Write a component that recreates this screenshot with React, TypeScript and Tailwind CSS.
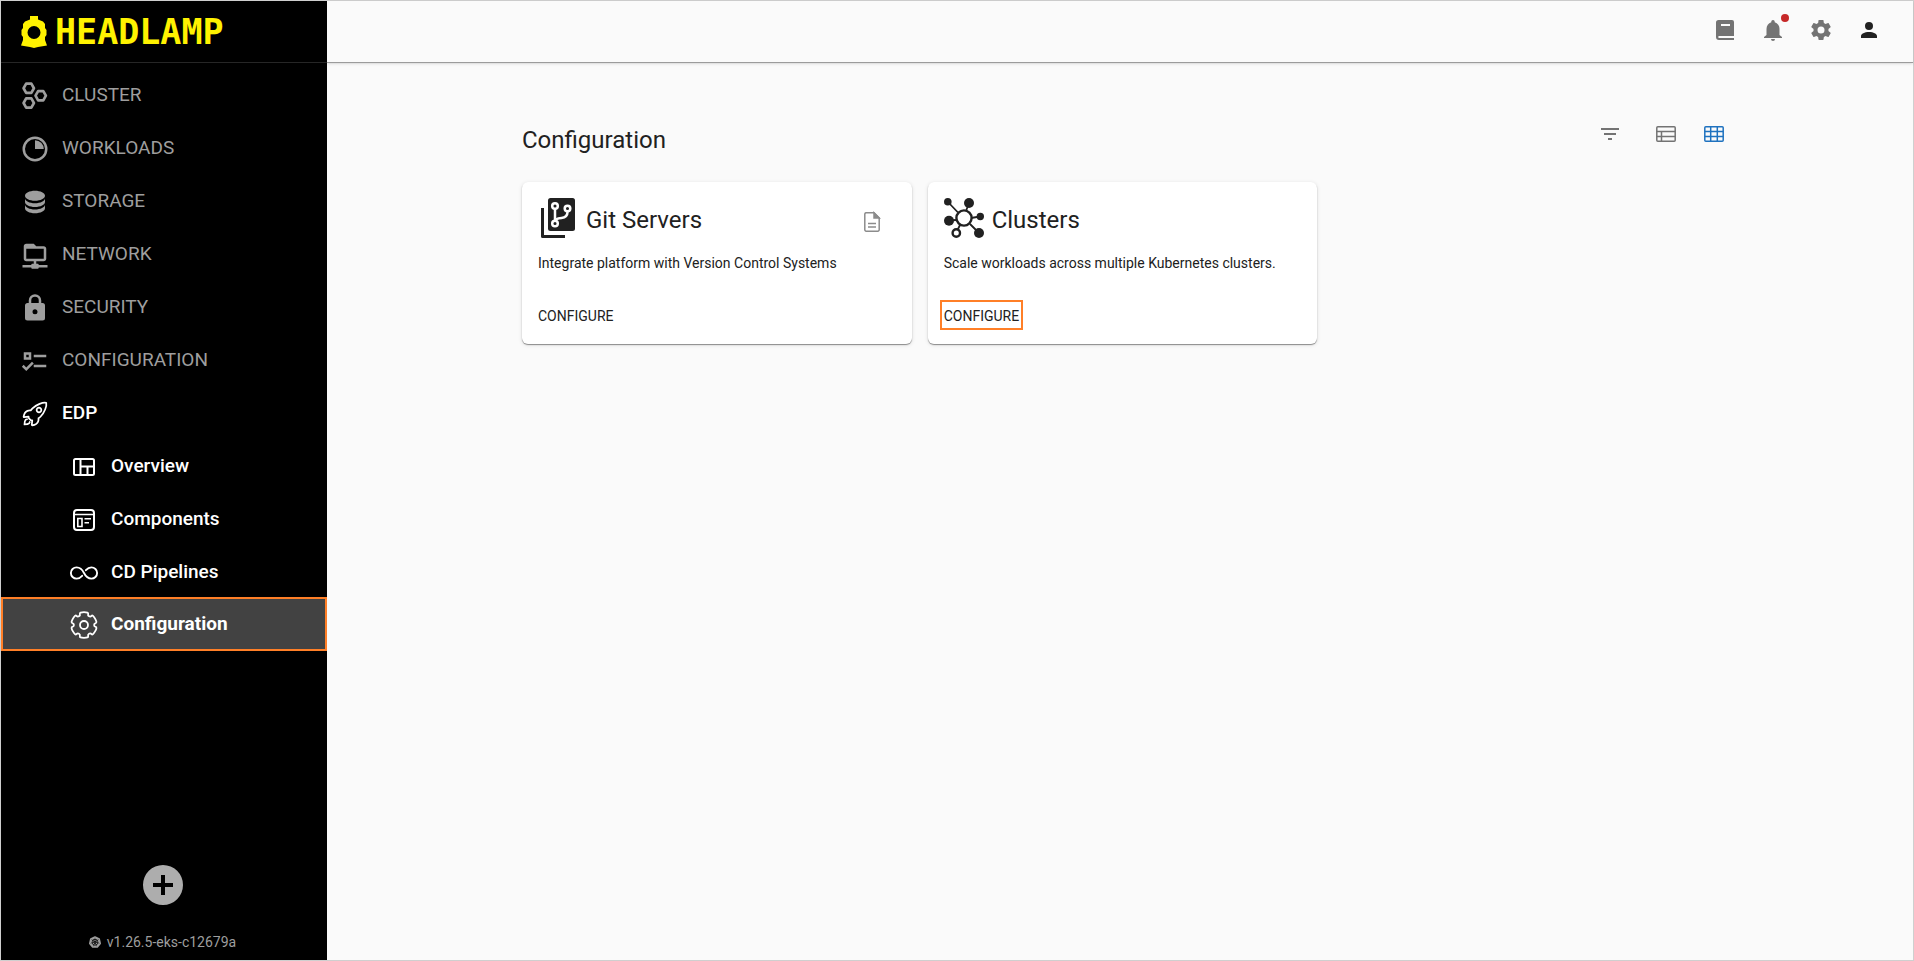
import React from "react";
import { IoInfiniteOutline, IoRocketOutline } from "react-icons/io5";
import { SiKubernetes } from "react-icons/si";

function Glyph({ d, className }: { d: string; className: string }) {
  return (
    <svg viewBox="0 0 24 24" fill="currentColor" aria-hidden="true" className={className}>
      <path fillRule="evenodd" d={d} />
    </svg>
  );
}

const paths = {
  database:
    "M12,3C7.58,3 4,4.79 4,7C4,9.21 7.58,11 12,11C16.42,11 20,9.21 20,7C20,4.79 16.42,3 12,3M4,9V12C4,14.21 7.58,16 12,16C16.42,16 20,14.21 20,12V9C20,11.21 16.42,13 12,13C7.58,13 4,11.21 4,9M4,14V17C4,19.21 7.58,21 12,21C16.42,21 20,19.21 20,17V14C20,16.21 16.42,18 12,18C7.58,18 4,16.21 4,14Z",
  network:
    "M15 20C15 19.45 14.55 19 14 19H13V17H19C20.11 17 21 16.11 21 15V7C21 5.9 20.11 5 19 5H13L11 3H5C3.9 3 3 3.9 3 5V15C3 16.11 3.9 17 5 17H11V19H10C9.45 19 9 19.45 9 20H2V22H9C9 22.55 9.45 23 10 23H14C14.55 23 15 22.55 15 22H22V20H15M5 15V7H19V15H5Z",
  lock: "M12,17A2,2 0 0,0 14,15C14,13.89 13.1,13 12,13A2,2 0 0,0 10,15A2,2 0 0,0 12,17M18,8A2,2 0 0,1 20,10V20A2,2 0 0,1 18,22H6A2,2 0 0,1 4,20V10C4,8.89 4.9,8 6,8H7V6A5,5 0 0,1 12,1A5,5 0 0,1 17,6V8H18M12,3A3,3 0 0,0 9,6V8H15V6A3,3 0 0,0 12,3Z",
  checks:
    "M3,5H9V11H3V5M5,7V9H7V7H5M11,7H21V9H11V7M11,15H21V17H11V15M5,20L1.5,16.5L2.91,15.09L5,17.17L9.59,12.59L11,14L5,20Z",
  bell: "M12 2a1.7 1.7 0 0 1 1.7 1.9v.4C16.7 5.1 18.5 7.7 18.5 11v6l2.500 2v1H3v-1l2.500-2v-6c0-3.300 1.800-5.900 4.800-6.700v-.4A1.700 1.700 0 0 1 12 2M10 21h4a2 2 0 0 1-4 0Z",
  cog: "M12,15.5A3.5,3.5 0 0,1 8.5,12A3.5,3.5 0 0,1 12,8.5A3.5,3.5 0 0,1 15.5,12A3.5,3.5 0 0,1 12,15.5M19.43,12.97C19.47,12.65 19.5,12.33 19.5,12C19.5,11.67 19.47,11.34 19.43,11L21.54,9.37C21.73,9.22 21.78,8.95 21.66,8.73L19.66,5.27C19.54,5.05 19.27,4.96 19.05,5.05L16.56,6.05C16.04,5.66 15.5,5.32 14.87,5.07L14.5,2.42C14.46,2.18 14.25,2 14,2H10C9.75,2 9.54,2.18 9.5,2.42L9.13,5.07C8.5,5.32 7.96,5.66 7.44,6.05L4.95,5.05C4.73,4.96 4.46,5.05 4.34,5.27L2.34,8.73C2.21,8.95 2.27,9.22 2.46,9.37L4.57,11C4.53,11.34 4.5,11.67 4.5,12C4.5,12.33 4.53,12.65 4.57,12.97L2.46,14.63C2.27,14.78 2.21,15.05 2.34,15.27L4.34,18.73C4.46,18.95 4.73,19.03 4.95,18.95L7.44,17.94C7.96,18.34 8.5,18.68 9.13,18.93L9.5,21.58C9.54,21.82 9.75,22 10,22H14C14.25,22 14.46,21.82 14.5,21.58L14.87,18.93C15.5,18.67 16.04,18.34 16.56,17.94L19.05,18.95C19.27,19.03 19.54,18.95 19.66,18.73L21.66,15.27C21.78,15.05 21.73,14.78 21.54,14.63L19.43,12.97Z",
  account:
    "M12,4A4,4 0 0,1 16,8A4,4 0 0,1 12,12A4,4 0 0,1 8,8A4,4 0 0,1 12,4M12,14C16.42,14 20,15.79 20,18V20H4V18C4,15.79 7.58,14 12,14Z",
  book: "M5.500 2H19a2 2 0 0 1 2 2v14H6.200a1 1 0 0 0 0 2H21v2H6a3 3 0 0 1-3-3V4.500A2.500 2.500 0 0 1 5.500 2M8 6v2h9V6Z",
  filter: "M3 6h18v2H3M6 11h12v2H6M10 16h4v2h-4Z",
  plus: "M17,13H13V17H11V13H7V11H11V7H13V11H17M12,2A10,10 0 0,0 2,12A10,10 0 0,0 12,22A10,10 0 0,0 22,12A10,10 0 0,0 12,2Z",
};

function HexagonsIcon() {
  return (
    <svg viewBox="0 0 26 26" fill="none" stroke="currentColor" strokeWidth="2.500" strokeLinejoin="round" aria-hidden="true" className="size-7">
      <path d="M4.800 1.500h4.800l2.400 4.300-2.400 4.300H4.800L2.400 5.800ZM4.800 15.200h4.800l2.400 4.300-2.400 4.300H4.800l-2.400-4.300ZM15.900 8.400h4.800l2.400 4.300-2.400 4.300h-4.800l-2.400-4.300Z" />
    </svg>
  );
}

function SliceIcon() {
  return (
    <svg viewBox="0 0 24 24" aria-hidden="true" className="size-[30px]">
      <circle cx="12" cy="12" r="9" fill="none" stroke="currentColor" strokeWidth="2" />
      <path d="M12 5a7 7 0 0 1 7 7h-7Z" fill="currentColor" />
    </svg>
  );
}

function OverviewIcon() {
  return (
    <svg viewBox="0 0 28 28" fill="none" stroke="currentColor" strokeWidth="2" aria-hidden="true" className="size-7">
      <rect x="4" y="6" width="20" height="16" rx="1.500" />
      <path d="M10.500 6v16M10.500 13.500H24M17.500 13.500V22" />
    </svg>
  );
}

function ComponentsIcon() {
  return (
    <svg viewBox="0 0 28 28" fill="none" stroke="currentColor" strokeWidth="2" aria-hidden="true" className="size-7">
      <rect x="4" y="4" width="20" height="20" rx="3" />
      <path d="M4 8.500h20M7.800 12.500h4.200v8H7.800ZM14.500 12.800h6.500M14.500 16.800h4.500" strokeWidth="1.600" />
    </svg>
  );
}

// Six wide teeth around the centre, rounded by curving through the midpoints.
function gearOutline() {
  const points: [number, number][] = [];
  for (let tooth = 0; tooth < 6; tooth++) {
    for (const [offset, radius] of [
      [-20, 13.6],
      [20, 13.6],
      [21, 10.2],
      [39, 10.2],
    ]) {
      const angle = ((tooth * 60 - 90 + offset) * Math.PI) / 180;
      points.push([15 + radius * Math.cos(angle), 15 + radius * Math.sin(angle)]);
    }
  }
  const n = points.length;
  const mid = (i: number) => {
    const a = points[i % n];
    const b = points[(i + 1) % n];
    return ((a[0] + b[0]) / 2).toFixed(2) + " " + ((a[1] + b[1]) / 2).toFixed(2);
  };
  let d = "M" + mid(n - 1);
  points.forEach((p, i) => {
    d += "Q" + p[0].toFixed(2) + " " + p[1].toFixed(2) + " " + mid(i);
  });
  return d + "Z";
}

function GearIcon() {
  return (
    <svg viewBox="0 0 30 30" fill="none" stroke="currentColor" strokeWidth="1.800" strokeLinejoin="round" aria-hidden="true" className="size-[30px]">
      <path d={gearOutline()} />
      <circle cx="15" cy="15" r="4" />
    </svg>
  );
}

function LampIcon() {
  return (
    <svg viewBox="0 0 26 32" fill="#fff200" aria-hidden="true" className="h-8 w-[26px]">
      <path fillRule="evenodd" d="M9 0h8v3.500l5 2 2 2.500v4l1.500 2v5l-1.500 2v3l2 5.500L17 31l-4 1-4-1-9-1.500L2 24v-3l-1.500-2v-5L2 12V8l2-2.500 5-2ZM13 10a6.500 6.500 0 1 0 0 13 6.500 6.500 0 0 0 0-13Z" />
    </svg>
  );
}

function GitServersIcon() {
  return (
    <svg viewBox="0 0 40 40" fill="none" aria-hidden="true" className="size-10">
      <path d="M4.500 10v28.500H27" stroke="#212121" strokeWidth="3" strokeLinejoin="round" />
      <rect x="10" y="0" width="27" height="33" rx="2.500" fill="#212121" />
      <g stroke="#fff" strokeWidth="2.500">
        <path d="M17 11v11M29.500 14c0 4-2 5.500-6 6s-6.500 1-6.500 3" />
        <circle cx="17" cy="8" r="2.800" />
        <circle cx="29.500" cy="10.500" r="2.800" />
        <circle cx="17" cy="25.500" r="2.800" />
      </g>
    </svg>
  );
}

function ClustersIcon() {
  return (
    <svg viewBox="0 0 40 40" fill="#212121" stroke="#212121" aria-hidden="true" className="size-10">
      <path d="M4 4l10 10.500M25 5l-3 8M36 18.500l-9 1.500M5 22.500l7-.5M12 35l4-8M35 35l-9-9" strokeWidth="1.800" />
      <g stroke="none">
        <circle cx="3.800" cy="3.800" r="3.800" />
        <circle cx="25" cy="5" r="5" />
        <circle cx="36.300" cy="18.500" r="3.700" />
        <circle cx="5" cy="22.700" r="5" />
        <circle cx="35" cy="35" r="5" />
      </g>
      <circle cx="20" cy="20" r="7.600" fill="#fff" strokeWidth="2.400" />
      <circle cx="12.300" cy="35" r="3.700" fill="#fff" strokeWidth="2.400" />
    </svg>
  );
}

function DocIcon() {
  return (
    <svg viewBox="0 0 24 24" fill="none" stroke="currentColor" strokeWidth="1.500" aria-hidden="true" className="size-6">
      <path d="M14 2.800H6A1.700 1.700 0 0 0 4.800 4v16A1.700 1.700 0 0 0 6 21.200h12a1.700 1.700 0 0 0 1.200-1.200V8ZM8 13.500h8M8 17h8" />
      <path d="M14 2.800V8h5.200Z" fill="currentColor" />
    </svg>
  );
}

function ListViewIcon() {
  return (
    <svg viewBox="0 0 24 24" fill="none" stroke="currentColor" strokeWidth="1.500" aria-hidden="true" className="size-6">
      <rect x="2.800" y="4.800" width="18.400" height="14.400" rx="1" />
      <path d="M2.800 9.500h18.400M2.800 14.500h18.400M7.500 9.500V19" />
    </svg>
  );
}

function GridViewIcon() {
  return (
    <svg viewBox="0 0 24 24" fill="none" stroke="currentColor" strokeWidth="1.500" aria-hidden="true" className="size-6">
      <rect x="2.800" y="4.800" width="18.400" height="14.400" rx="1" />
      <path d="M2.800 9.500h18.400M2.800 14.500h18.400M8.700 5v14M15.300 5v14" />
    </svg>
  );
}

const sections = [
  { label: "CLUSTER", icon: <HexagonsIcon /> },
  { label: "WORKLOADS", icon: <SliceIcon /> },
  { label: "STORAGE", icon: <Glyph d={paths.database} className="size-[30px]" /> },
  { label: "NETWORK", icon: <Glyph d={paths.network} className="size-[30px]" /> },
  { label: "SECURITY", icon: <Glyph d={paths.lock} className="size-[30px]" /> },
  { label: "CONFIGURATION", icon: <Glyph d={paths.checks} className="size-[30px]" /> },
];

const edpPages = [
  { label: "Overview", icon: <OverviewIcon /> },
  { label: "Components", icon: <ComponentsIcon /> },
  { label: "CD Pipelines", icon: <IoInfiniteOutline className="size-[30px]" /> },
];

function Sidebar() {
  return (
    <aside className="flex w-[326px] shrink-0 flex-col bg-black">
      <a href="#home" className="flex h-[62px] items-center gap-2 border-b border-[#262626] pl-5 text-[#fff200]">
        <LampIcon />
        <span className="font-['DejaVu_Sans_Mono',monospace] text-[35px] font-bold leading-8">HEADLAMP</span>
      </a>
      <nav className="pt-1">
        <ul className="text-[19px]">
          {sections.map((s) => (
            <li key={s.label}>
              <a href={"#" + s.label.toLowerCase()} className="flex h-[53px] items-center gap-[11px] pl-[18px] text-[#9e9e9e]">
                <span className="flex w-8 justify-center pt-1">{s.icon}</span>
                <span className="pt-[3px]">{s.label}</span>
              </a>
            </li>
          ))}
          <li>
            <a href="#edp" className="flex h-[53px] items-center gap-[11px] pl-[18px] text-white">
              <span className="flex w-8 justify-center pt-1">
                <IoRocketOutline className="size-7" />
              </span>
              <span className="pt-[3px] font-medium">EDP</span>
            </a>
            <ul>
              {edpPages.map((p) => (
                <li key={p.label}>
                  <a href={"#" + p.label.toLowerCase()} className="flex h-[53px] items-center gap-[11px] pl-[67px] text-white">
                    <span className="flex w-8 justify-center pt-1">{p.icon}</span>
                    <span className="pt-[3px] font-medium">{p.label}</span>
                  </a>
                </li>
              ))}
              <li>
                <a
                  href="#edp-configuration"
                  aria-current="page"
                  className="flex h-[54px] items-center gap-[11px] border-2 border-[#ff7f27] bg-[#424242] pl-[65px] text-white"
                >
                  <span className="flex w-8 justify-center pt-0.5">
                    <GearIcon />
                  </span>
                  <span className="font-bold">Configuration</span>
                </a>
              </li>
            </ul>
          </li>
        </ul>
      </nav>
      <div className="mt-auto flex flex-col items-center gap-[23px] pb-2 pr-[3px]">
        <button type="button" aria-label="Add cluster" className="text-[#adadad]">
          <Glyph d={paths.plus} className="size-12" />
        </button>
        <p className="flex items-center gap-1.5 text-sm text-[#9e9e9e]">
          <SiKubernetes className="size-3" />
          v1.26.5-eks-c12679a
        </p>
      </div>
    </aside>
  );
}

function TopBar() {
  return (
    <header className="flex h-[62px] items-center justify-end border-b border-[#9b9b9b] pb-1 pr-5 text-[#737373] shadow-sm">
      <button type="button" aria-label="Documentation" className="p-3">
        <Glyph d={paths.book} className="size-6" />
      </button>
      <button type="button" aria-label="Notifications" className="relative p-3">
        <Glyph d={paths.bell} className="size-6" />
        <span className="absolute right-2 top-2 size-2 rounded-full bg-[#c62828]" />
      </button>
      <button type="button" aria-label="Settings" className="p-3">
        <Glyph d={paths.cog} className="size-6" />
      </button>
      <button type="button" aria-label="Account" className="p-3 text-[#212121]">
        <Glyph d={paths.account} className="size-6" />
      </button>
    </header>
  );
}

type CardProps = {
  title: string;
  text: string;
  icon: React.ReactNode;
  docs?: boolean;
  highlighted?: boolean;
};

function ConfigCard({ title, text, icon, docs, highlighted }: CardProps) {
  return (
    <article className="flex h-[162px] flex-col rounded-md bg-white px-4 pt-4 text-[#212121] shadow-[0_1px_1px_rgba(0,0,0,0.4),0_1px_4px_rgba(0,0,0,0.12)]">
      <div className="flex items-center gap-2">
        {icon}
        <h2 className="pt-1 text-2xl leading-9">{title}</h2>
        {docs && (
          <button type="button" aria-label="Open documentation" className="ml-auto mr-3 pt-2 text-[#8c8c8c]">
            <DocIcon />
          </button>
        )}
      </div>
      <p className="mt-4 text-sm leading-[18px]">{text}</p>
      <a
        href={"#" + title.toLowerCase().replace(" ", "-")}
        className={
          highlighted
            ? "-ml-1 mb-3.5 mt-auto flex h-[30px] items-center self-start border-2 border-[#ff7f27] px-0.5 pt-0.5 text-sm"
            : "-ml-1 mb-3.5 mt-auto flex h-[30px] items-center self-start border-2 border-transparent px-0.5 pt-0.5 text-sm"
        }
      >
        CONFIGURE
      </a>
    </article>
  );
}

export default function App() {
  return (
    <div className="flex min-h-screen border border-[#cfcfcf] bg-[#fafafa] font-['Roboto','Liberation_Sans',sans-serif]">
      <Sidebar />
      <div className="flex min-w-0 flex-1 flex-col">
        <TopBar />
        <main className="mx-auto w-full max-w-[1240px] pl-[22px] pr-[17px] pt-[59px]">
          <div className="flex items-start justify-between text-[#737373]">
            <h1 className="pt-0.5 text-2xl text-[#212121]">Configuration</h1>
            <div className="-mr-[3px] flex items-center">
              <button type="button" aria-label="Filter" className="mr-8">
                <Glyph d={paths.filter} className="size-6" />
              </button>
              <button type="button" aria-label="List view" className="mr-6">
                <ListViewIcon />
              </button>
              <button type="button" aria-label="Grid view" aria-pressed="true" className="text-[#1f72bf]">
                <GridViewIcon />
              </button>
            </div>
          </div>
          <div className="mt-[26px] grid grid-cols-3 gap-4">
            <ConfigCard title="Git Servers" text="Integrate platform with Version Control Systems" icon={<GitServersIcon />} docs />
            <ConfigCard
              title="Clusters"
              text="Scale workloads across multiple Kubernetes clusters."
              icon={<ClustersIcon />}
              highlighted
            />
          </div>
        </main>
      </div>
    </div>
  );
}
